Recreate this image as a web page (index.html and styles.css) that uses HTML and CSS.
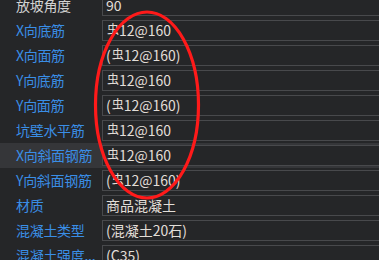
FILE: index.html
```html
<!DOCTYPE html>
<html>
<head>
<meta charset="utf-8">
<link rel="stylesheet" href="styles.css">
</head>
<body>
<div class="panel">
  <div class="grid">
    <div class="row"><div class="label plain">放坡角度</div><div class="value">90</div></div>
    <div class="row"><div class="label">X向底筋</div><div class="value"><span class="bar">虫</span>12@160</div></div>
    <div class="row"><div class="label">X向面筋</div><div class="value">(<span class="bar">虫</span>12@160)</div></div>
    <div class="row"><div class="label">Y向底筋</div><div class="value"><span class="bar">虫</span>12@160</div></div>
    <div class="row"><div class="label">Y向面筋</div><div class="value">(<span class="bar">虫</span>12@160)</div></div>
    <div class="row"><div class="label">坑壁水平筋</div><div class="value"><span class="bar">虫</span>12@160</div></div>
    <div class="row selected"><div class="label">X向斜面钢筋</div><div class="value"><span class="bar">虫</span>12@160</div></div>
    <div class="row"><div class="label">Y向斜面钢筋</div><div class="value">(<span class="bar">虫</span>12@160)</div></div>
    <div class="row"><div class="label">材质</div><div class="value">商品混凝土</div></div>
    <div class="row"><div class="label">混凝土类型</div><div class="value">(混凝土20石)</div></div>
    <div class="row"><div class="label">混凝土强度...</div><div class="value">(C35)</div></div>
  </div>
  <svg class="mark" width="379" height="260" viewBox="0 0 379 260">
    <ellipse cx="147" cy="105" rx="51.5" ry="93" fill="none" stroke="#ff1a1a" stroke-width="3.2"/>
  </svg>
</div>
</body>
</html>
```
FILE: styles.css
```css
html, body {
  margin: 0;
  padding: 0;
  background: #252628;
  overflow: hidden;
}
.panel {
  position: relative;
  width: 379px;
  height: 260px;
  overflow: hidden;
  font-family: "Noto Sans CJK SC", "Noto Sans", sans-serif;
  font-size: 14px;
}
.grid {
  margin-top: -7px;
  display: flex;
  flex-direction: column;
}
.row {
  height: 25px;
  display: flex;
  align-items: center;
}
.row.selected {
  background: #353639;
}
.label {
  width: 86px;
  padding-left: 16px;
  flex: none;
  color: #3a8ee6;
  white-space: nowrap;
  line-height: 21px;
  letter-spacing: -0.3px;
}
.label.plain {
  color: #d2d2d2;
}
.value {
  flex: 1;
  height: 19px;
  border: 1px solid #48494c;
  border-right: none;
  background: #252628;
  color: #e2ded8;
  padding-left: 3px;
  line-height: 19px;
  white-space: nowrap;
}
.bar {
  font-size: 12px;
  position: relative;
  top: -2px;
  margin-left: 1px;
}
.mark {
  position: absolute;
  left: 0;
  top: 0;
}
```
